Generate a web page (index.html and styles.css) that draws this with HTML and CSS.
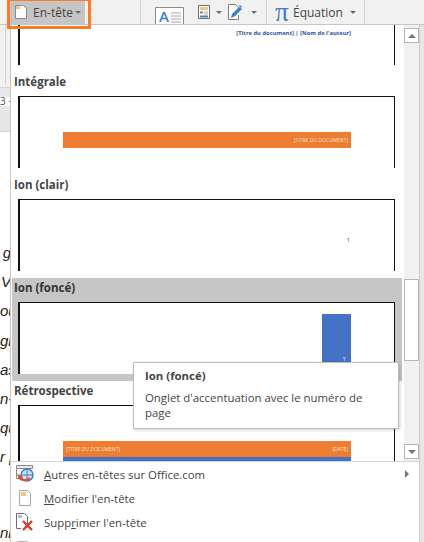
FILE: index.html
```html
<!DOCTYPE html>
<html lang="fr">
<head>
    <meta charset="UTF-8">
    <meta name="viewport" content="width=device-width, initial-scale=1.0">
    <title>En-tête</title>
    <link rel="stylesheet" href="styles.css">
</head>
<body>
    <div class="ribbon">
        <div class="rib-btn header-btn">
            <svg class="icon-page" width="12" height="14" viewBox="0 0 12 14">
                <path d="M.5.5h8l3 3v10H.5z" fill="#fff" stroke="#8a8a8a"/>
                <path d="M1 1h4v3H1z" fill="#edc77f"/>
            </svg>
            <span class="header-label">En-tête</span>
            <i class="caret"></i>
        </div>
        <div class="rib-sep first-sep"></div>
        <svg class="icon-textbox" width="29" height="17" viewBox="0 0 29 17">
            <path d="M.5 17V.5h28V17" fill="#fff" stroke="#8a8a8a"/>
            <text x="4" y="15" class="icon-letter">A</text>
            <path d="M16 6h10M16 9h10M16 12h10M16 15h10" stroke="#a6a6a6"/>
        </svg>
        <svg class="icon-parts" width="12" height="14" viewBox="0 0 12 14">
            <path d="M.5.5h11v13H.5z" fill="#fff" stroke="#6d6d6d"/>
            <path d="M2 2h8v3H2z" fill="#edc77f"/>
            <path d="M2 6.500h3v2H2z" fill="#7f7f7f"/>
            <path d="M6 7h4M6 9h4" stroke="#a6a6a6"/>
            <path d="M2 10.500h8v2H2z" fill="#4a7ebb"/>
        </svg>
        <i class="caret parts-caret"></i>
        <svg class="icon-sign" width="15" height="16" viewBox="0 0 15 16">
            <path d="M.5 15.500V.5h7l3 3v2M10.500 11v4.500H.5" fill="#fff" stroke="#7d7d7d"/>
            <path d="M3 14l1-4 7-7 3 2-7 7z" fill="#3f80c4"/>
            <path d="M11 2l1-1 2 2-1 1z" fill="#3f80c4"/>
        </svg>
        <i class="caret sign-caret"></i>
        <div class="rib-sep second-sep"></div>
        <span class="pi">π</span>
        <span class="eq-label">Équation</span>
        <i class="caret eq-caret"></i>
        <div class="rib-sep third-sep"></div>
    </div>

    <div class="work">
        <div class="gutter">
            <div class="gutter-tab"><div class="gutter-line"></div></div>
            <div class="ruler-top"></div>
            <div class="ruler">3 ·</div>
            <div class="ruler-under"></div>
            <div class="doc-text">
                <div>g</div>
                <div>V</div>
                <div>ou</div>
                <div>gr</div>
                <div>as,</div>
                <div>n-t</div>
                <div>qu</div>
                <div>r p</div>
                <div class="doc-gap">ni</div>
            </div>
        </div>

        <div class="menu">
            <div class="gallery">
                <div class="gallery-list">
                    <div class="item">
                        <div class="box box-cut">
                            <div class="cut-title">[Titre du document] | [Nom de l'auteur]</div>
                        </div>
                    </div>
                    <div class="item">
                        <div class="item-label">Intégrale</div>
                        <div class="box">
                            <div class="band band-integrale"><span>[TITRE DU DOCUMENT]</span></div>
                        </div>
                    </div>
                    <div class="item">
                        <div class="item-label">Ion (clair)</div>
                        <div class="box box-clair"><span>1</span></div>
                    </div>
                    <div class="item item-active">
                        <div class="item-label">Ion (foncé)</div>
                        <div class="box">
                            <div class="tab"><span>1</span></div>
                        </div>
                    </div>
                    <div class="item">
                        <div class="item-label">Rétrospective</div>
                        <div class="box">
                            <div class="band band-retro"><span>[TITRE DU DOCUMENT]</span><span>[DATE]</span></div>
                            <div class="band-blue"></div>
                        </div>
                    </div>
                </div>
                <div class="scrollbar">
                    <div class="sb-btn"><i class="caret caret-up"></i></div>
                    <div class="sb-track"><div class="sb-thumb"></div></div>
                    <div class="sb-btn"><i class="caret caret-down"></i></div>
                </div>
            </div>

            <div class="menu-row">
                <svg class="row-icon" width="18" height="18" viewBox="0 0 18 18">
                    <path d="M.5.5h16v3H.5z" fill="#e8e8e8" stroke="#8a8a8a"/>
                    <path d="M.5 3.500v10h3" fill="none" stroke="#8a8a8a"/>
                    <circle cx="11" cy="10" r="6" fill="#cfe0f3" stroke="#3f80c4" stroke-width="1.500"/>
                    <path d="M5 10h12M11 4v12" stroke="#3f80c4"/>
                    <path d="M3 12c2 4 8 4 11 1" fill="none" stroke="#e2492b" stroke-width="2"/>
                    <path d="M1 9l2 5 4-3z" fill="#e2492b"/>
                </svg>
                <span class="row-text"><u>A</u>utres en-têtes sur Office.com</span>
                <i class="caret caret-right"></i>
            </div>
            <div class="menu-row">
                <svg class="row-icon" width="18" height="18" viewBox="0 0 18 18">
                    <path d="M3.500 1.500h8l3 3v12h-11z" fill="#fff" stroke="#a6a6a6"/>
                    <path d="M5 3h5v4H5z" fill="#edc77f"/>
                </svg>
                <span class="row-text"><u>M</u>odifier l'en-tête</span>
            </div>
            <div class="menu-row">
                <svg class="row-icon" width="18" height="18" viewBox="0 0 18 18">
                    <path d="M.5.5h8l3 3v8M5 15.500H.5V.5" fill="#fff" stroke="#6d6d6d"/>
                    <path d="M2 2h4v3H2z" fill="#bdbdbd"/>
                    <path d="M7 8l9 9M16 8l-9 9" stroke="#d83b21" stroke-width="2.400"/>
                </svg>
                <span class="row-text">Supp<u>r</u>imer l'en-tête</span>
            </div>
            <div class="menu-row">
                <svg class="row-icon" width="18" height="18" viewBox="0 0 18 18">
                    <path d="M1.500 4.500h10v12h-10z" fill="#e6e6e6" stroke="#b5b5b5"/>
                </svg>
            </div>
        </div>

        <div class="edge"></div>
    </div>

    <div class="tooltip">
        <div class="tooltip-title">Ion (foncé)</div>
        <div class="tooltip-text">Onglet d'accentuation avec le numéro de page</div>
    </div>
    <div class="highlight"></div>
</body>
</html>
```

FILE: styles.css
```css
body {
    margin: 0;
    width: 424px;
    height: 542px;
    overflow: hidden;
    position: relative;
    background: #fff;
    font-family: "Open Sans", Arial, sans-serif;
    color: #444;
}

/* ribbon */
.ribbon {
    display: flex;
    align-items: center;
    height: 24px;
    background: #f1f1f1;
    border-bottom: 1px solid #c6c6c6;
}
.rib-btn {
    display: flex;
    align-items: center;
    height: 24px;
}
.header-btn {
    width: 75px;
    flex: none;
    margin-left: 10px;
    background: #c5c5c5;
    font-size: 12px;
    color: #444;
}
.header-label {
    white-space: nowrap;
    width: 39px;
    flex: none;
}
.icon-page {
    margin: 0 6px 0 5px;
    flex: none;
}
.header-btn .caret {
    margin-left: 3px;
}
.rib-sep {
    width: 1px;
    height: 24px;
    background: #d2d2d2;
    flex: none;
}
.first-sep {
    margin-left: 55px;
}
.icon-textbox {
    margin: 7px 0 0 14px;
    flex: none;
}
.icon-letter {
    font-family: "Open Sans", Arial, sans-serif;
    font-size: 15px;
    font-weight: 600;
    fill: #3f80c4;
}
.icon-parts {
    margin-left: 14px;
    flex: none;
}
.parts-caret {
    margin-left: 6px;
}
.icon-sign {
    margin-left: 6px;
    flex: none;
}
.sign-caret {
    margin-left: 8px;
}
.second-sep {
    margin-left: 9px;
}
.pi {
    font-family: "Liberation Serif", serif;
    font-size: 27px;
    line-height: 24px;
    color: #3f80c4;
    margin-left: 8px;
    width: 18px;
    flex: none;
}
.eq-label {
    font-size: 12px;
    width: 56px;
    flex: none;
    white-space: nowrap;
}
.eq-caret {
    margin-left: 1px;
}
.third-sep {
    margin-left: 8px;
}

.caret {
    display: block;
    flex: none;
    width: 0;
    height: 0;
    border-left: 3px solid transparent;
    border-right: 3px solid transparent;
    border-top: 3px solid #6d6d6d;
}

/* area under the ribbon */
.work {
    display: flex;
    height: 517px;
}
.gutter {
    width: 10px;
    flex: none;
    overflow: hidden;
    background: #fff;
}
.gutter-tab {
    height: 62px;
    background: #f1f1f1;
    border-bottom: 1px solid #d2d2d2;
}
.gutter-line {
    width: 1px;
    height: 60px;
    margin-left: 5px;
    background: #d2d2d2;
}
.ruler-top {
    height: 9px;
    background: #e8e8e8;
}
.ruler {
    height: 9px;
    font-size: 10px;
    line-height: 9px;
    color: #555;
    white-space: nowrap;
}
.ruler-under {
    height: 25px;
    background: #e6e6e6;
    border-bottom: 1px solid #d2d2d2;
}
.doc-text {
    padding-top: 106px;
    width: 11px;
    font-family: "Liberation Sans", Arial, sans-serif;
    font-style: italic;
    font-size: 15px;
    line-height: 29.200px;
    color: #222;
    text-align: right;
    white-space: nowrap;
}
.doc-gap {
    margin-top: 46px;
}

.menu {
    width: 408px;
    flex: none;
    overflow: hidden;
    background: #fff;
    border-left: 1px solid #c6c6c6;
}
.gallery {
    display: flex;
    height: 436px;
    border-bottom: 1px solid #d4d4d4;
}
.gallery-list {
    width: 390px;
    flex: none;
    margin: 0 2px 0 1px;
    overflow: hidden;
}
.item {
    height: 103px;
    box-sizing: border-box;
}
.item:first-child {
    height: 47px;
}
.item-active {
    background: #c6c6c6;
}
.item-label {
    height: 24px;
    padding-left: 2px;
    font-size: 11.500px;
    font-weight: 700;
    line-height: 20px;
    color: #444;
}
.item-active .item-label {
    color: #333;
}
.box {
    height: 72px;
    margin: 0 6px;
    box-sizing: border-box;
    width: 377px;
    overflow: hidden;
    background: #fff;
    border: 1px solid #111;
    border-left-width: 2px;
    border-bottom: 0;
}
.box-cut {
    height: 40px;
    border-top: 0;
    padding: 3px 43px 0 0;
    text-align: right;
}
.cut-title {
    font-size: 5.800px;
    font-weight: 700;
    line-height: 10px;
    color: #2f5597;
    white-space: nowrap;
}
.band {
    display: flex;
    align-items: center;
    justify-content: flex-end;
    width: 288px;
    height: 16px;
    margin: 35px 0 0 43px;
    padding: 0 3px;
    box-sizing: border-box;
    background: #ed7d31;
    font-size: 5px;
    color: #fbe0cd;
}
.band-retro {
    justify-content: space-between;
}
.band-blue {
    width: 288px;
    height: 6px;
    margin-left: 43px;
    background: #4472c4;
}
.box-clair {
    padding: 36px 44px 0 0;
    text-align: right;
    font-size: 5.500px;
    color: #333;
}
.tab {
    display: flex;
    align-items: flex-end;
    justify-content: flex-end;
    width: 29px;
    height: 59px;
    margin: 11px 0 0 302px;
    padding: 0 5px 10px 0;
    box-sizing: border-box;
    background: #4472c4;
    font-size: 6px;
    color: #fff;
}

/* scroll bar */
.scrollbar {
    display: flex;
    flex-direction: column;
    width: 16px;
    flex: none;
    padding: 3px 1px 2px 0;
    box-sizing: border-box;
    background: #f1f1f1;
}
.sb-btn {
    display: flex;
    align-items: center;
    justify-content: center;
    height: 15px;
    box-sizing: border-box;
    background: #fff;
    border: 1px solid #b5b5b5;
    flex: none;
}
.sb-track {
    flex: 1;
    padding-top: 236px;
}
.sb-thumb {
    height: 82px;
    box-sizing: border-box;
    background: #fff;
    border: 1px solid #b5b5b5;
}
.caret-up {
    border-top: 0;
    border-bottom: 4px solid #777;
    border-left-width: 4px;
    border-right-width: 4px;
}
.caret-down {
    border-top: 4px solid #777;
    border-left-width: 4px;
    border-right-width: 4px;
}

/* commands under the gallery */
.menu-row {
    display: flex;
    align-items: center;
    height: 24px;
    font-size: 11.400px;
}
.row-icon {
    flex: none;
    margin: 0 10px 0 5px;
}
.row-text {
    width: 358px;
    flex: none;
}
.caret-right {
    border-left: 4px solid #777;
    border-top: 4px solid transparent;
    border-bottom: 4px solid transparent;
    border-right: 0;
    margin-left: 3px;
}

.edge {
    flex: 1;
    background: #e6e6e6;
    border-left: 1px solid #cfcfcf;
}

/* overlays */
.tooltip {
    position: absolute;
    left: 133px;
    top: 362px;
    width: 266px;
    height: 67px;
    box-sizing: border-box;
    padding: 5px 11px;
    background: #fff;
    border: 1px solid #bebebe;
    box-shadow: 1px 1px 3px rgba(0, 0, 0, 0.2);
    font-size: 11.400px;
    line-height: 15px;
}
.tooltip-title {
    font-weight: 700;
    margin-bottom: 7px;
}
.highlight {
    position: absolute;
    left: 7px;
    top: 0;
    width: 84px;
    height: 29px;
    box-sizing: border-box;
    border: 3px solid #fb7c27;
    border-top-width: 1px;
}
```
